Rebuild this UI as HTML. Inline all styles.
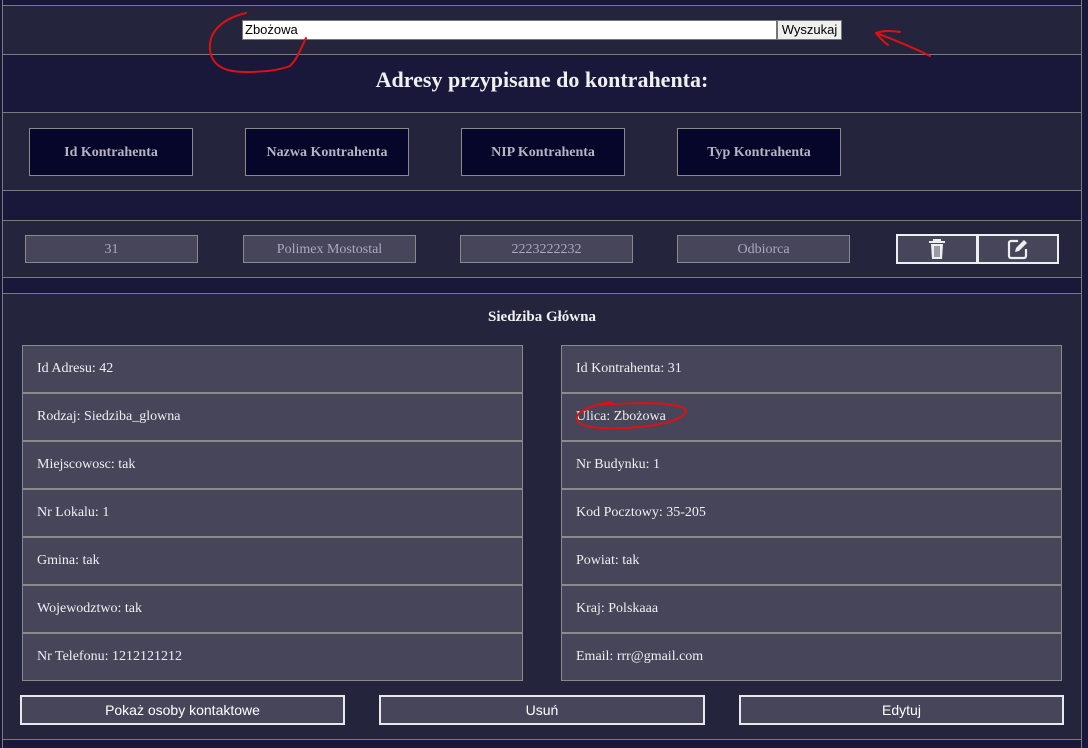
<!DOCTYPE html>
<html><head><meta charset="utf-8"><style>
*{box-sizing:border-box;margin:0;padding:0}
body{width:1088px;height:748px;background:#19183a;position:relative;overflow:hidden;font-family:"Liberation Serif",serif}
.p{position:absolute;left:2px;width:1080px;background:#25243d;border:1px solid #7a7a7a}
.a{position:absolute}
.hb{position:absolute;top:128px;width:164px;height:48px;background:#06052a;border:1px solid #8a8a8a;color:#b5b5c0;font-weight:bold;font-size:14px;display:flex;align-items:center;justify-content:center;padding-top:2px}
.c{position:absolute;top:235px;width:173px;height:28px;background:#46455a;border:1px solid #8a8a8a;color:#a9a9c0;font-size:14px;display:flex;align-items:center;justify-content:center;padding-top:2px}
.g{position:absolute;width:501px;border:1px solid #8a8a8a;background:#46455a}
.g div{height:48px;border-top:2px solid #8a8a8a;color:#f0f0f0;font-size:14px;padding-left:14px;display:flex;align-items:center}
.g div:first-child{border-top:none;height:46px}
.btn{position:absolute;top:695px;height:30px;background:#46455a;border:2px solid #e8e8e8;color:#fff;font-family:"Liberation Sans",sans-serif;font-size:14px;display:flex;align-items:center;justify-content:center}
</style></head><body>
<div class="a" style="left:2px;top:0;width:1px;height:748px;background:#7a7a7a"></div>
<div class="a" style="left:1081px;top:0;width:1px;height:748px;background:#7a7a7a"></div>
<div class="p" style="top:5px;height:50px"></div>
<div class="a" style="left:242px;top:20px;width:535px;height:20px;background:#fff;border:1px solid #767676;font-family:'Liberation Sans',sans-serif;font-size:13px;padding-left:2px;line-height:18px;color:#000">Zbożowa</div>
<div class="a" style="left:777px;top:20px;width:65px;height:20px;background:#efefef;border:1px solid #767676;font-family:'Liberation Sans',sans-serif;font-size:13px;text-align:center;line-height:18px;color:#000">Wyszukaj</div>
<div class="a" style="left:0;top:67px;width:1084px;text-align:center;color:#f0f0f0;font-weight:bold;font-size:22px">Adresy przypisane do kontrahenta:</div>
<div class="p" style="top:112px;height:79px"></div>
<div class="hb" style="left:29px">Id Kontrahenta</div>
<div class="hb" style="left:245px">Nazwa Kontrahenta</div>
<div class="hb" style="left:461px">NIP Kontrahenta</div>
<div class="hb" style="left:677px">Typ Kontrahenta</div>
<div class="p" style="top:220px;height:58px"></div>
<div class="c" style="left:25px">31</div>
<div class="c" style="left:243px">Polimex Mostostal</div>
<div class="c" style="left:460px">2223222232</div>
<div class="c" style="left:677px">Odbiorca</div>
<div class="a" style="left:896px;top:234px;width:82px;height:30px;background:#46455a;border:2px solid #eee;display:flex;align-items:center;justify-content:center">
<svg width="18" height="22" viewBox="0 0 18 22"><path d="M1 4h16M6 4V2h6v2" stroke="#eee" stroke-width="2" fill="none"/><path d="M3 6h12l-1 15H4z" fill="#eee"/><path d="M7 8v11M9 8v11M11 8v11" stroke="#46455a" stroke-width="1"/></svg></div>
<div class="a" style="left:977px;top:234px;width:82px;height:30px;background:#46455a;border:2px solid #eee;display:flex;align-items:center;justify-content:center">
<svg width="22" height="22" viewBox="0 0 22 22"><path d="M11 3H4a2 2 0 0 0-2 2v13a2 2 0 0 0 2 2h13a2 2 0 0 0 2-2v-7" stroke="#eee" stroke-width="2.2" fill="none"/><path d="M8 14l1-4 8-8 3 3-8 8z" fill="#eee"/></svg></div>
<div class="p" style="top:293px;height:447px"></div>
<div class="a" style="left:0;top:309px;width:1084px;text-align:center;color:#f0f0f0;font-weight:bold;font-size:15px">Siedziba Główna</div>
<div class="g" style="left:22px;top:345px"><div>Id Adresu: 42</div><div>Rodzaj: Siedziba_glowna</div><div>Miejscowosc: tak</div><div>Nr Lokalu: 1</div><div>Gmina: tak</div><div>Wojewodztwo: tak</div><div>Nr Telefonu: 1212121212</div></div>
<div class="g" style="left:561px;top:345px"><div>Id Kontrahenta: 31</div><div>Ulica: Zbożowa</div><div>Nr Budynku: 1</div><div>Kod Pocztowy: 35-205</div><div>Powiat: tak</div><div>Kraj: Polskaaa</div><div>Email: rrr@gmail.com</div></div>
<div class="btn" style="left:20px;width:325px">Pokaż osoby kontaktowe</div>
<div class="btn" style="left:379px;width:326px">Usuń</div>
<div class="btn" style="left:739px;width:325px">Edytuj</div>
<svg class="a" style="left:0;top:0" width="1088" height="748">
<g stroke="#e01010" stroke-width="2" fill="none" stroke-linecap="round">
<path d="M246 13C225 18 208 30 210 50C212 66 225 72 245 72C265 72 280 70 290 66C298 58 300 50 306 38"/>
<path d="M930 56C910 46 895 40 876 33M876 33C885 30 892 31 900 32M876 33C880 38 884 42 888 45"/>
<path d="M612 402C590 405 575 412 577 420C580 430 620 430 655 425C680 420 690 414 684 408C670 402 640 402 600 405"/>
</g></svg>
</body></html>
